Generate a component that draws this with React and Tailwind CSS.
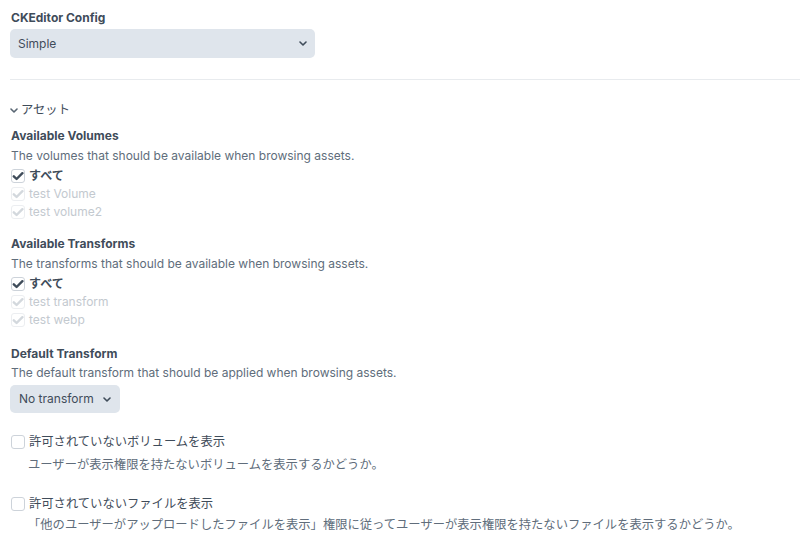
import React from "react";

const font = { fontFamily: 'Inter, "Noto Sans CJK JP", sans-serif' };

function Check({ checked, disabled }) {
  return (
    <span
      className={`inline-flex items-center justify-center w-[14px] h-[14px] rounded-[3px] border ${
        disabled ? "border-[#eceef1]" : "border-[#cdd3da]"
      } bg-white mr-[4px] shrink-0`}
    >
      {checked && (
        <svg width="12" height="12" viewBox="0 0 12 12">
          <path
            d="M1.8 6.3 L4.6 9 L10.4 3.2"
            fill="none"
            stroke={disabled ? "#d3d8dd" : "#3f4c5a"}
            strokeWidth="2.4"
            strokeLinecap="round"
            strokeLinejoin="round"
          />
        </svg>
      )}
    </span>
  );
}

function Chevron({ color = "#3f4c5a" }) {
  return (
    <svg width="8" height="5" viewBox="0 0 8 5">
      <path d="M1 1 L4 4 L7 1" fill="none" stroke={color} strokeWidth="1.6" strokeLinecap="round" strokeLinejoin="round" />
    </svg>
  );
}

function CheckRow({ label, checked, disabled, bold }) {
  return (
    <div className={`flex items-center h-[18px] ${disabled ? "text-[#c3c9cf]" : "text-[#3f4c5a]"} ${bold ? "font-bold" : ""}`}>
      <Check checked={checked} disabled={disabled} />
      <span>{label}</span>
    </div>
  );
}

export default function App() {
  return (
    <div className="w-[800px] h-[546px] bg-white overflow-hidden text-[12px] leading-[18px] text-[#3f4c5a] pt-[9px] pl-[10px]" style={font}>
      <div className="font-bold pl-[1px]">CKEditor Config</div>
      <div className="mt-[2px] w-[305px] h-[29px] rounded-[5px] bg-[#dfe5ec] flex items-center justify-between pl-[8px] pr-[8px]">
        <span>Simple</span>
        <Chevron />
      </div>
      <div className="mt-[21px] h-px bg-[#e8ebee]" />
      <div className="mt-[21px] flex items-center gap-[3px]">
        <Chevron color="#596673" />
        <span className="text-[12.3px]">アセット</span>
      </div>

      <div className="pl-[1px]">
        <div className="mt-[8px] font-bold">Available Volumes</div>
        <div className="mt-[2px] text-[#606d7b]">The volumes that should be available when browsing assets.</div>
        <div className="mt-[2px]">
          <CheckRow label="すべて" checked bold />
          <CheckRow label="test Volume" checked disabled />
          <CheckRow label="test volume2" checked disabled />
        </div>

        <div className="mt-[14px] font-bold">Available Transforms</div>
        <div className="mt-[2px] text-[#606d7b]">The transforms that should be available when browsing assets.</div>
        <div className="mt-[2px]">
          <CheckRow label="すべて" checked bold />
          <CheckRow label="test transform" checked disabled />
          <CheckRow label="test webp" checked disabled />
        </div>

        <div className="mt-[16px] font-bold">Default Transform</div>
        <div className="mt-[1px] text-[#606d7b]">The default transform that should be applied when browsing assets.</div>
      </div>
      <div className="mt-[3px] w-[110px] h-[28px] rounded-[5px] bg-[#dfe5ec] flex items-center gap-[9px] pl-[9px]">
        <span>No transform</span>
        <Chevron />
      </div>

      <div className="pl-[1px] text-[12.3px]">
        <div className="mt-[20px] flex items-center">
          <Check />
          <span>許可されていないボリュームを表示</span>
        </div>
        <div className="mt-[5px] pl-[17px] text-[#606d7b]">ユーザーが表示権限を持たないボリュームを表示するかどうか。</div>
        <div className="mt-[21px] flex items-center">
          <Check />
          <span>許可されていないファイルを表示</span>
        </div>
        <div className="mt-[3px] pl-[17px] text-[#606d7b]">「他のユーザーがアップロードしたファイルを表示」権限に従ってユーザーが表示権限を持たないファイルを表示するかどうか。</div>
      </div>
    </div>
  );
}
